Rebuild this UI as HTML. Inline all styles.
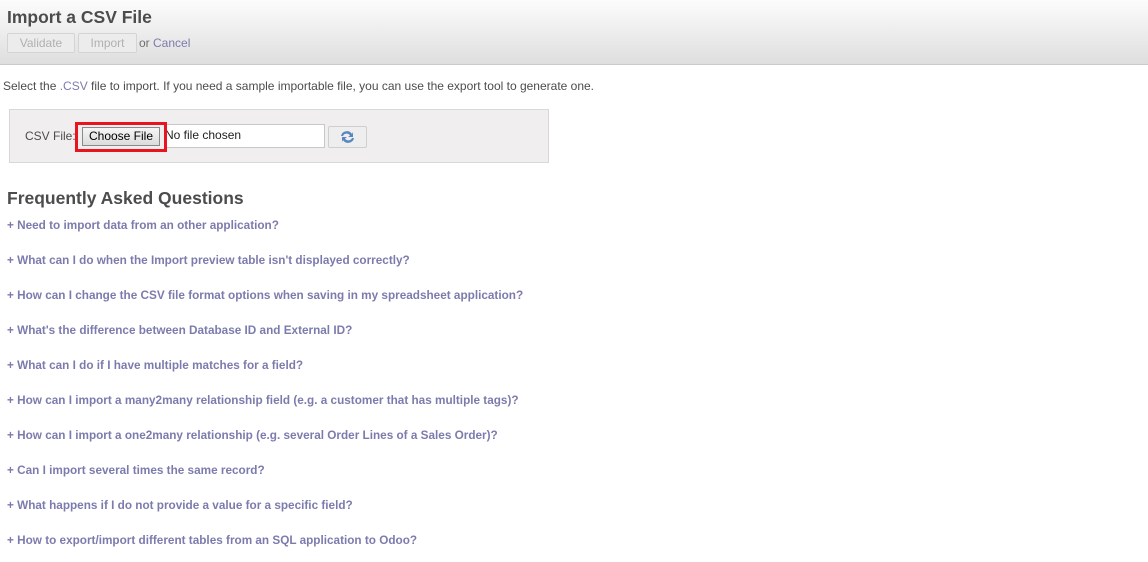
<!DOCTYPE html>
<html><head><style>
body{margin:0;width:1148px;height:562px;background:#fff;font-family:"Liberation Sans",Arial,sans-serif;font-size:12px;color:#4c4c4c;overflow:hidden;position:relative}
.hdr{position:absolute;left:0;top:0;width:1148px;height:64px;background:linear-gradient(#fcfcfc,#dedede);border-bottom:1px solid #cacaca}
h1{position:absolute;left:7px;top:7px;margin:0;font-size:17.5px;font-weight:bold;color:#4c4c4c}
.btn{position:absolute;top:33px;height:18px;border:1px solid #d4d4d4;border-radius:2px;background:#ececec;color:#b0b0b0;font-size:12px;line-height:18px;text-align:center}
.or{position:absolute;left:139px;top:36px;color:#6e6e6e}
.or a{color:#7c7bad}
a{text-decoration:none;color:#7c7bad}
.p{position:absolute;left:3px;top:79px;font-size:12px;color:#4c4c4c}
.box{position:absolute;left:9px;top:109px;width:538px;height:52px;background:#f0eeee;border:1px solid #d8d8d8}
.lbl{position:absolute;left:25px;top:129px;color:#4c4c4c}
.red{position:absolute;left:75px;top:122px;width:86px;height:24px;border:3px solid #e8151f}
.cf{position:absolute;left:82px;top:127px;width:76px;height:17px;border:1px solid #8a8a8a;background:linear-gradient(#f6f6f6,#dcdcdc);font-size:12px;line-height:17px;text-align:center;color:#000}
.inp{position:absolute;left:164px;top:124px;width:159px;height:22px;border:1px solid #c8c8c8;background:#fff;font-size:12px;line-height:20px;color:#222;padding-left:0}
.rf{position:absolute;left:328px;top:126px;width:37px;height:20px;border:1px solid #cfcfcf;background:#eee;border-radius:2px}
h2{position:absolute;left:7px;top:188px;margin:0;font-size:17.5px;font-weight:bold;color:#4c4c4c}
.q{position:absolute;left:7px;font-weight:bold;font-size:11.75px;color:#7c7bad}
</style></head><body>
<div class="hdr"></div>
<h1>Import a CSV File</h1>
<div class="btn" style="left:7px;width:66px">Validate</div>
<div class="btn" style="left:78px;width:57px">Import</div>
<div class="or">or <a>Cancel</a></div>
<div class="p">Select the <a>.CSV</a> file to import. If you need a sample importable file, you can use the export tool to generate one.</div>
<div class="box"></div>
<div class="lbl">CSV File:</div>
<div class="inp">No file chosen</div>
<div class="red"></div>
<div class="cf">Choose File</div>
<div class="rf"><svg width="37" height="20" viewBox="0 0 37 20"><path d="M12 9a6 6 0 0 1 11-2l1-2v5h-5l2-1.5A4 4 0 0 0 14 9z" fill="#5a86c0"/><path d="M25 11a6 6 0 0 1-11 2l-1 2v-5h5l-2 1.5A4 4 0 0 0 23 11z" fill="#5a86c0"/></svg></div>
<h2>Frequently Asked Questions</h2>
<div class="q" style="top:219px">+ Need to import data from an other application?</div>
<div class="q" style="top:254px">+ What can I do when the Import preview table isn't displayed correctly?</div>
<div class="q" style="top:289px">+ How can I change the CSV file format options when saving in my spreadsheet application?</div>
<div class="q" style="top:324px">+ What's the difference between Database ID and External ID?</div>
<div class="q" style="top:359px">+ What can I do if I have multiple matches for a field?</div>
<div class="q" style="top:394px">+ How can I import a many2many relationship field (e.g. a customer that has multiple tags)?</div>
<div class="q" style="top:429px">+ How can I import a one2many relationship (e.g. several Order Lines of a Sales Order)?</div>
<div class="q" style="top:464px">+ Can I import several times the same record?</div>
<div class="q" style="top:499px">+ What happens if I do not provide a value for a specific field?</div>
<div class="q" style="top:534px">+ How to export/import different tables from an SQL application to Odoo?</div>
</body></html>
